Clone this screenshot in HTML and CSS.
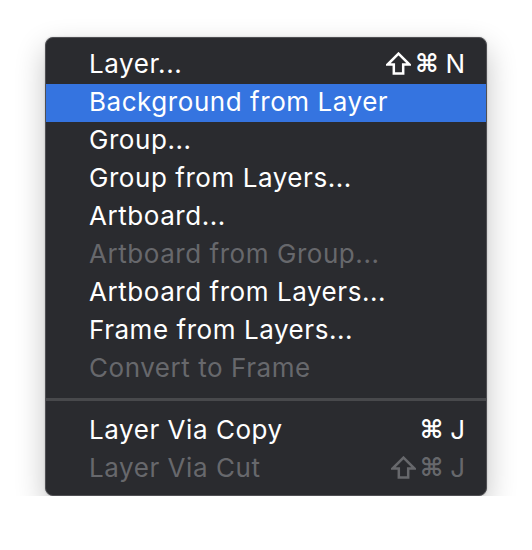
FILE: index.html
```html
<!DOCTYPE html>
<html>
<head>
<meta charset="utf-8">
<link rel="stylesheet" href="styles.css">
</head>
<body>
<div class="menu">
  <div class="item"><span class="label">Layer...</span><span class="keys"><svg class="shift" viewBox="0 0 24 22"><path d="M12 1.5 L22.5 12 H16.5 V20.5 H7.5 V12 H1.5 Z" fill="none" stroke="currentColor" stroke-width="2.4" stroke-linejoin="miter"/></svg><span class="cmd">⌘</span><span class="key">N</span></span></div>
  <div class="item active"><span class="label">Background from Layer</span></div>
  <div class="item"><span class="label">Group...</span></div>
  <div class="item"><span class="label">Group from Layers...</span></div>
  <div class="item"><span class="label">Artboard...</span></div>
  <div class="item disabled"><span class="label">Artboard from Group...</span></div>
  <div class="item"><span class="label">Artboard from Layers...</span></div>
  <div class="item"><span class="label">Frame from Layers...</span></div>
  <div class="item disabled"><span class="label">Convert to Frame</span></div>
  <div class="sep"></div>
  <div class="item"><span class="label">Layer Via Copy</span><span class="keys"><span class="cmd">⌘</span><span class="key">J</span></span></div>
  <div class="item disabled"><span class="label">Layer Via Cut</span><span class="keys"><svg class="shift" viewBox="0 0 24 22"><path d="M12 1.5 L22.5 12 H16.5 V20.5 H7.5 V12 H1.5 Z" fill="none" stroke="currentColor" stroke-width="2.4" stroke-linejoin="miter"/></svg><span class="cmd">⌘</span><span class="key">J</span></span></div>
</div>
</body>
</html>
```
FILE: styles.css
```css
html, body {
  margin: 0;
  padding: 0;
  background: #ffffff;
}
body {
  padding: 37px 0 0 45px;
  font-family: Inter, "Noto Sans", sans-serif;
}
.menu {
  box-sizing: border-box;
  width: 442px;
  background: #2a2b2f;
  border: 1px solid #505054;
  border-radius: 8px;
  padding: 8px 0 7px 0;
  box-shadow: 0 12px 30px rgba(0,0,0,0.24), 0 0 2px rgba(0,0,0,0.2);
  color: #ffffff;
}
.item {
  box-sizing: border-box;
  height: 38px;
  display: flex;
  align-items: center;
  justify-content: space-between;
  padding: 0 21px 3px 43px;
  font-size: 26px;
  letter-spacing: 0.55px;
}
.item.active {
  background: #3574e0;
}
.item.disabled {
  color: #67686c;
}
.keys {
  display: flex;
  align-items: center;
  gap: 4px;
  letter-spacing: 0;
}
.shift {
  width: 25px;
  height: 23px;
  display: block;
}
.cmd {
  font-family: "DejaVu Sans", sans-serif;
  font-size: 25px;
  font-weight: bold;
}
.key {
  margin-left: 3px;
}
.sep {
  height: 3px;
  background: #48494c;
  margin: 10px 0 11px 0;
}
```
